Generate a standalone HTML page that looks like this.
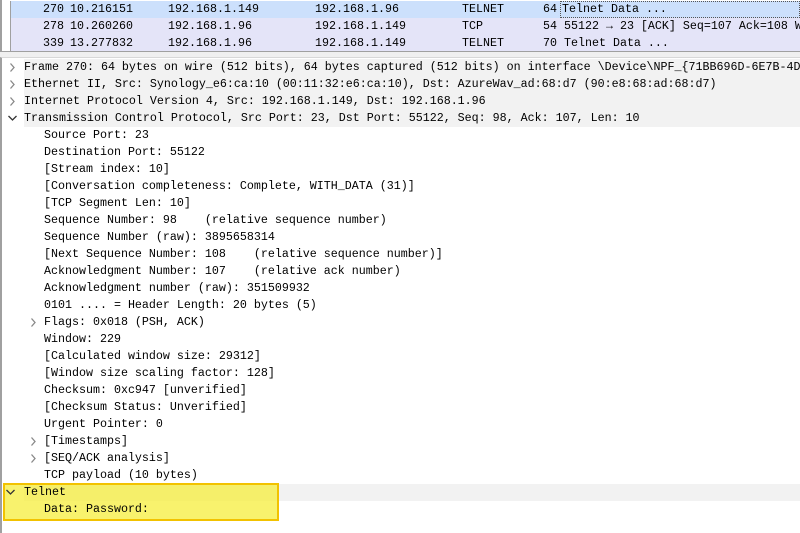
<!DOCTYPE html>
<html><head><meta charset="utf-8"><style>
*{margin:0;padding:0;box-sizing:border-box}
body{width:800px;height:533px;overflow:hidden;background:#fff;font-family:"Liberation Mono",monospace;font-size:11.67px;color:#000;position:relative}
.pl{position:absolute;left:0;top:0;width:800px;height:51px;background:#fff;border-left:2px solid #a0a0a0;overflow:hidden}
.pr{position:absolute;left:8px;right:0;height:17px;line-height:17px;white-space:pre;border-left:1px solid #a0a0a0;overflow:hidden}
.pr span{position:absolute;top:0}
.sep{position:absolute;left:0;top:51px;width:800px;height:6px;background:#f0f0f0;border-top:1px solid #a0a0a0}
.tree{position:absolute;left:0;top:57px;width:800px;height:476px;border-left:2px solid #a0a0a0;border-top:1px solid #d8d8d8;overflow:hidden}
.r{position:absolute;left:0;right:0;height:17px;line-height:17px;white-space:pre;overflow:hidden}
.r .t{position:absolute;top:0}
.r.top .bg{position:absolute;left:22px;right:0;top:0;bottom:0;background:#f2f2f2}
.ar{position:absolute;top:0}
.hl{position:absolute;left:3px;top:483px;width:276px;height:38px;background:rgba(245,238,60,0.75);border:2px solid #f2c200}
</style></head><body>
<div class="pl">
 <div class="pr" style="top:1px;background:#cce0fc"><span style="left:32px">270</span><span style="left:59px">10.216151</span><span style="left:157px">192.168.1.149</span><span style="left:304px">192.168.1.96</span><span style="left:451px">TELNET</span><span style="left:532px">64</span><span style="left:549px;right:0;border:1px dotted #555;height:17px;line-height:15px;padding-left:1px">Telnet Data ...</span></div>
 <div class="pr" style="top:18px;background:#e4e4f8"><span style="left:32px">278</span><span style="left:59px">10.260260</span><span style="left:157px">192.168.1.96</span><span style="left:304px">192.168.1.149</span><span style="left:451px">TCP</span><span style="left:532px">54 55122 → 23 [ACK] Seq=107 Ack=108 Win=</span></div>
 <div class="pr" style="top:35px;background:#e4e4f8"><span style="left:32px">339</span><span style="left:59px">13.277832</span><span style="left:157px">192.168.1.96</span><span style="left:304px">192.168.1.149</span><span style="left:451px">TELNET</span><span style="left:532px">70 Telnet Data ...</span></div>
</div>
<div class="sep"></div>
<div class="tree">
<div class="r top" style="top:1px"><div class="bg"></div><svg class="ar" style="left:6px" width="10" height="17"><path d="M2.5 4.5l3.5 4-3.5 4" fill="none" stroke="#888" stroke-width="1.3"/></svg><span class="t" style="left:22px">Frame 270: 64 bytes on wire (512 bits), 64 bytes captured (512 bits) on interface \Device\NPF_{71BB696D-6E7B-4D</span></div>
<div class="r top" style="top:18px"><div class="bg"></div><svg class="ar" style="left:6px" width="10" height="17"><path d="M2.5 4.5l3.5 4-3.5 4" fill="none" stroke="#888" stroke-width="1.3"/></svg><span class="t" style="left:22px">Ethernet II, Src: Synology_e6:ca:10 (00:11:32:e6:ca:10), Dst: AzureWav_ad:68:d7 (90:e8:68:ad:68:d7)</span></div>
<div class="r top" style="top:35px"><div class="bg"></div><svg class="ar" style="left:6px" width="10" height="17"><path d="M2.5 4.5l3.5 4-3.5 4" fill="none" stroke="#888" stroke-width="1.3"/></svg><span class="t" style="left:22px">Internet Protocol Version 4, Src: 192.168.1.149, Dst: 192.168.1.96</span></div>
<div class="r top" style="top:52px"><div class="bg"></div><svg class="ar" style="left:4px" width="12" height="17"><path d="M2.5 6l4 4 4-4" fill="none" stroke="#333" stroke-width="1.3"/></svg><span class="t" style="left:22px">Transmission Control Protocol, Src Port: 23, Dst Port: 55122, Seq: 98, Ack: 107, Len: 10</span></div>
<div class="r" style="top:69px"><span class="t" style="left:42px">Source Port: 23</span></div>
<div class="r" style="top:86px"><span class="t" style="left:42px">Destination Port: 55122</span></div>
<div class="r" style="top:103px"><span class="t" style="left:42px">[Stream index: 10]</span></div>
<div class="r" style="top:120px"><span class="t" style="left:42px">[Conversation completeness: Complete, WITH_DATA (31)]</span></div>
<div class="r" style="top:137px"><span class="t" style="left:42px">[TCP Segment Len: 10]</span></div>
<div class="r" style="top:154px"><span class="t" style="left:42px">Sequence Number: 98    (relative sequence number)</span></div>
<div class="r" style="top:171px"><span class="t" style="left:42px">Sequence Number (raw): 3895658314</span></div>
<div class="r" style="top:188px"><span class="t" style="left:42px">[Next Sequence Number: 108    (relative sequence number)]</span></div>
<div class="r" style="top:205px"><span class="t" style="left:42px">Acknowledgment Number: 107    (relative ack number)</span></div>
<div class="r" style="top:222px"><span class="t" style="left:42px">Acknowledgment number (raw): 351509932</span></div>
<div class="r" style="top:239px"><span class="t" style="left:42px">0101 .... = Header Length: 20 bytes (5)</span></div>
<div class="r" style="top:256px"><svg class="ar" style="left:27px" width="10" height="17"><path d="M2.5 4.5l3.5 4-3.5 4" fill="none" stroke="#888" stroke-width="1.3"/></svg><span class="t" style="left:42px">Flags: 0x018 (PSH, ACK)</span></div>
<div class="r" style="top:273px"><span class="t" style="left:42px">Window: 229</span></div>
<div class="r" style="top:290px"><span class="t" style="left:42px">[Calculated window size: 29312]</span></div>
<div class="r" style="top:307px"><span class="t" style="left:42px">[Window size scaling factor: 128]</span></div>
<div class="r" style="top:324px"><span class="t" style="left:42px">Checksum: 0xc947 [unverified]</span></div>
<div class="r" style="top:341px"><span class="t" style="left:42px">[Checksum Status: Unverified]</span></div>
<div class="r" style="top:358px"><span class="t" style="left:42px">Urgent Pointer: 0</span></div>
<div class="r" style="top:375px"><svg class="ar" style="left:27px" width="10" height="17"><path d="M2.5 4.5l3.5 4-3.5 4" fill="none" stroke="#888" stroke-width="1.3"/></svg><span class="t" style="left:42px">[Timestamps]</span></div>
<div class="r" style="top:392px"><svg class="ar" style="left:27px" width="10" height="17"><path d="M2.5 4.5l3.5 4-3.5 4" fill="none" stroke="#888" stroke-width="1.3"/></svg><span class="t" style="left:42px">[SEQ/ACK analysis]</span></div>
<div class="r" style="top:409px"><span class="t" style="left:42px">TCP payload (10 bytes)</span></div>
<div class="r top" style="top:426px"><div class="bg"></div></div>
</div>
<div class="hl"></div>
<div class="r" style="top:484px;z-index:2"><svg class="ar" style="left:4px" width="12" height="17"><path d="M2.5 6l4 4 4-4" fill="none" stroke="#333" stroke-width="1.3"/></svg><span class="t" style="left:24px">Telnet</span></div>
<div class="r" style="top:501px;z-index:2"><span class="t" style="left:44px">Data: Password:</span></div>
</body></html>
